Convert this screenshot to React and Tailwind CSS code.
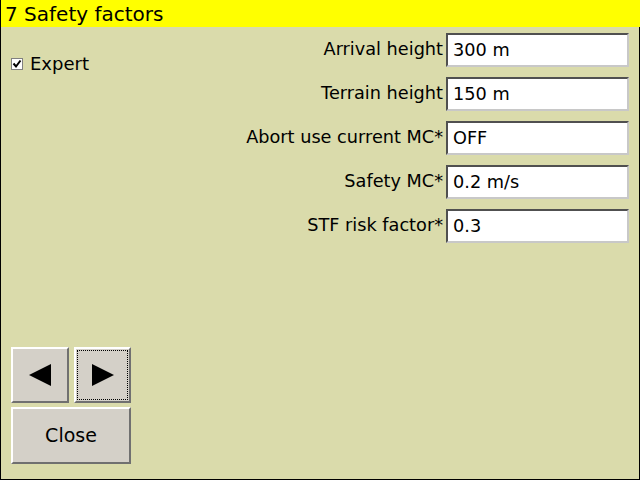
import React from "react";

const font = { fontFamily: '"DejaVu Sans", "Liberation Sans", sans-serif' };

function Field({ label, value }) {
  return (
    <div className="flex items-center h-[44px]">
      <span className="text-[17.7px] text-black mr-[3px] leading-none">{label}</span>
      <div className="w-[183px] h-[34px] bg-white border-t-2 border-l-2 border-t-[#505050] border-l-[#505050] border-b-2 border-r-2 border-b-[#c8c8c8] border-r-[#c8c8c8] flex items-center pl-[5px] text-[17.7px] text-black">
        {value}
      </div>
    </div>
  );
}

function Btn({ className = "", children }) {
  return (
    <div
      className={
        "bg-[#d4d0c8] border-t-2 border-l-2 border-t-white border-l-white border-b-2 border-r-2 border-b-[#707070] border-r-[#707070] flex items-center justify-center " +
        className
      }
    >
      {children}
    </div>
  );
}

export default function App() {
  return (
    <div className="w-[640px] h-[480px] flex flex-col bg-[#dadbab] text-black" style={font}>
      <div className="h-[27px] bg-[#ffff00] border-l border-black flex items-center pl-[4px] text-[20px] leading-none shrink-0">
        7 Safety factors
      </div>
      <div className="flex-1 flex border-l border-r border-b border-black">
        <div className="w-[140px] flex flex-col justify-between pl-[10px] pt-[28px] pb-[15px]">
          <div className="flex items-center">
            <div className="w-[12px] h-[12px] bg-white border border-[#808080] flex items-center justify-center">
              <svg width="10" height="10" viewBox="0 0 10 10">
                <path d="M1.5 4.5 L4 7.5 L8.5 1.5" stroke="black" strokeWidth="2" fill="none" />
              </svg>
            </div>
            <span className="ml-[7px] text-[18px] leading-none">Expert</span>
          </div>
          <div className="flex flex-col gap-[4px] w-[120px]">
            <div className="flex gap-[5px]">
              <Btn className="w-[58px] h-[56px]">
                <svg width="24" height="24" viewBox="0 0 24 24">
                  <polygon points="1,12 23,1 23,23" fill="black" />
                </svg>
              </Btn>
              <Btn className="w-[57px] h-[56px] relative">
                <div className="absolute inset-[1px] border border-dotted border-black"></div>
                <svg width="24" height="24" viewBox="0 0 24 24">
                  <polygon points="23,12 1,1 1,23" fill="black" />
                </svg>
              </Btn>
            </div>
            <Btn className="w-[120px] h-[57px] text-[19px]">Close</Btn>
          </div>
        </div>
        <div className="flex-1 flex flex-col items-end pr-[10px] pt-[1px]">
          <Field label="Arrival height" value="300 m" />
          <Field label="Terrain height" value="150 m" />
          <Field label="Abort use current MC*" value="OFF" />
          <Field label="Safety MC*" value="0.2 m/s" />
          <Field label="STF risk factor*" value="0.3" />
        </div>
      </div>
    </div>
  );
}
